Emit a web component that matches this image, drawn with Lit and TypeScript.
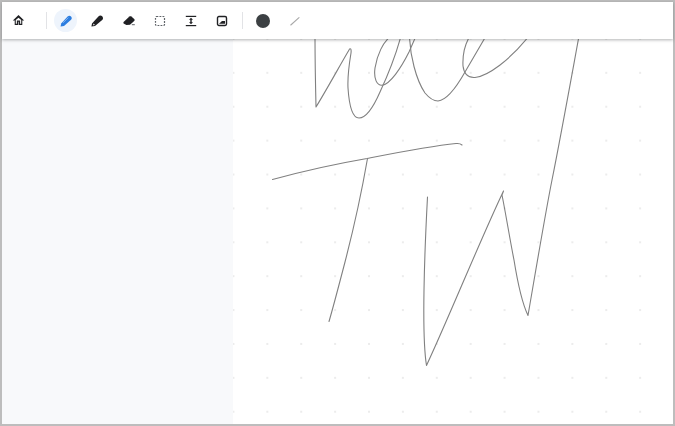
import { LitElement, html, css, svg } from 'lit';
import { customElement } from 'lit/decorators.js';

// handwriting strokes, in page coordinates
const STROKES = [
  'M315 36 C315 60 315.5 85 316 107 C327 89 339 67 349 50 C350.5 47.5 351.5 49 351 53 C349 65 347.5 78 348 88 C349 103 352 118 359 118 C366 118 373 108 380 92 C387 77 395 58 401 36',
  'M391 36 C383 42 377 55 375 68 C373.5 79 377 85.5 382 85.3 C390 84.5 401 68 409 52 L416 36',
  'M409.5 36 C410 55 416 80 425 93 C430 99 434 101 438 101 C447 100 456 88 465 72 L486 36',
  'M470 36 C465 44 462.5 56 463 66 C464 74 468 78 475 77.5 C488 76 510 60 529 36',
  'M272.5 179.5 C300 172 335 164 367 158.5 C395 153 430 146 456 143.5 C459 143.2 461 144 462 145',
  'M367.5 158.5 C362 190 352 235 345 262 C339 285 333 308 329 321.5',
  'M427.5 197 C426 225 424.5 260 424 290 C423.5 320 424 350 426.5 365.5 C450 315 478 245 503.5 191 L502 195 C506 215 510 240 514 260 C518 285 523 305 528 315.5 C535 275 545 215 552 180 C561 135 570 85 579 36',
];

@customElement('app-root')
export class AppRoot extends LitElement {
  static styles = css`
    :host {
      display: block;
      width: 675px;
      height: 426px;
      font-family: 'Roboto', sans-serif;
    }

    .frame {
      box-sizing: border-box;
      width: 100%;
      height: 100%;
      border: 2px solid #bdbdbd;
      display: flex;
      flex-direction: column;
      background: #fff;
    }

    .toolbar {
      flex: 0 0 37px;
      display: flex;
      align-items: center;
      padding-left: 1.35px;
      background: #fff;
      box-shadow: 0 1px 3px rgba(60, 64, 67, 0.4);
      position: relative;
      z-index: 1;
    }

    .tool {
      flex: 0 0 31.3px;
      height: 31px;
      display: flex;
      align-items: center;
      justify-content: center;
    }

    .tool svg {
      filter: blur(0.3px);
    }

    .active {
      position: relative;
    }

    .active::before {
      content: '';
      position: absolute;
      width: 23px;
      height: 23px;
      border-radius: 50%;
      background: #eef4fc;
    }

    .active svg {
      position: relative;
    }

    .sep {
      flex: 0 0 1px;
      height: 17px;
      background: #e2e3e6;
      margin: 0 3.7px 0 11px;
    }

    .sep.second {
      margin: 0 4.3px 0 4.3px;
    }

    .swatch {
      width: 14px;
      height: 14px;
      border-radius: 50%;
      background: #3c4043;
    }

    .body {
      flex: 1;
      display: flex;
      min-height: 0;
    }

    .side {
      flex: 0 0 231px;
      background: #f8f9fb;
    }

    .canvas {
      flex: 1;
      position: relative;
      overflow: hidden;
      background-color: #fff;
      background-image: radial-gradient(circle at center, #ececec 0, #ececec 1px, transparent 1.4px);
      background-size: 33.9px 33.9px;
      background-position: -16.5px -17px;
    }

    .ink {
      position: absolute;
      inset: 0;
      width: 100%;
      height: 100%;
      filter: blur(0.25px);
    }

    .ink path {
      fill: none;
      stroke: #808080;
      stroke-width: 1.1;
      stroke-linecap: round;
      stroke-linejoin: round;
    }
  `;

  render() {
    return html`
      <div class="frame">
        <div class="toolbar">
          <div class="tool">
            <svg width="13" height="13" viewBox="0 0 24 24" fill="#202124">
              <path d="M12 6.7l5 4.5V18h-2v-6H9v6H7v-6.8l5-4.5M12 2L1.5 12H5v8.5h6.5v-6h1v6H19V12h3.5L12 2z" />
            </svg>
          </div>
          <div class="sep"></div>
          <div class="tool active">
            <svg width="14" height="14" viewBox="0 0 14 14">
              <path d="M1.6 12.4 L2.2 9.4 L8.6 2.6 C9.6 1.6 11 1.5 12 2.4 C13 3.4 13 4.8 12 5.8 L5 12 Z" fill="#2b7de0" />
              <path d="M4 8.8 L9.4 3.6" stroke="#a6c8f4" stroke-width="0.7" fill="none" />
            </svg>
          </div>
          <div class="tool">
            <svg width="14" height="14" viewBox="0 0 14 14" fill="#202124">
              <path d="M1.4 12.6 L2 9.4 L8.4 2.6 C9.4 1.4 11 1.2 12.2 2.2 C13.3 3.2 13.3 5 12.2 6 L5 12 Z" />
              <path d="M3.2 11 L3.5 9.6 L4.8 10.8 L3.8 11.4 Z" fill="#fff" />
            </svg>
          </div>
          <div class="tool">
            <svg width="14" height="14" viewBox="0 0 14 14" fill="#202124">
              <path d="M1.6 8 L7.4 2.6 C8 2.1 8.8 2.1 9.4 2.6 L12.2 5 C12.8 5.6 12.8 6.4 12.2 7 L8 10.8 L4.4 11 L1.6 9.6 C1.2 9.2 1.2 8.4 1.6 8 Z" />
              <rect x="9.8" y="10.2" width="3" height="1" fill="#5f6368" />
            </svg>
          </div>
          <div class="tool">
            <svg width="12" height="12" viewBox="0 0 12 12">
              <rect x="1.5" y="1.5" width="9" height="9" rx="1" fill="none" stroke="#5f6368" stroke-width="1.2" stroke-dasharray="1.8 1.2" />
            </svg>
          </div>
          <div class="tool">
            <svg width="12" height="12" viewBox="0 0 12 12" fill="#202124">
              <rect x="0.8" y="0.8" width="10.4" height="1.2" />
              <rect x="0.8" y="10" width="10.4" height="1.2" />
              <path d="M6 2.8 L8 4.8 L6.7 4.8 L6.7 7.2 L8 7.2 L6 9.2 L4 7.2 L5.3 7.2 L5.3 4.8 L4 4.8 Z" />
            </svg>
          </div>
          <div class="tool">
            <svg width="12" height="12" viewBox="0 0 12 12">
              <rect x="1.5" y="1.5" width="9" height="9" rx="1.4" fill="none" stroke="#202124" stroke-width="1.4" />
              <path d="M3 8.8 L6 6 L9 6 L9 8.8 Z" fill="#202124" />
            </svg>
          </div>
          <div class="sep second"></div>
          <div class="tool"><div class="swatch"></div></div>
          <div class="tool">
            <svg width="12" height="12" viewBox="0 0 12 12">
              <path d="M1.8 10 L10 2.6" stroke="#a8a8a8" stroke-width="1.1" stroke-linecap="round" fill="none" />
            </svg>
          </div>
        </div>
        <div class="body">
          <div class="side"></div>
          <div class="canvas">
            <svg class="ink" viewBox="233 39 440 385" preserveAspectRatio="xMinYMin meet">
              ${STROKES.map((d) => svg`<path d=${d} />`)}
            </svg>
          </div>
        </div>
      </div>
    `;
  }
}
